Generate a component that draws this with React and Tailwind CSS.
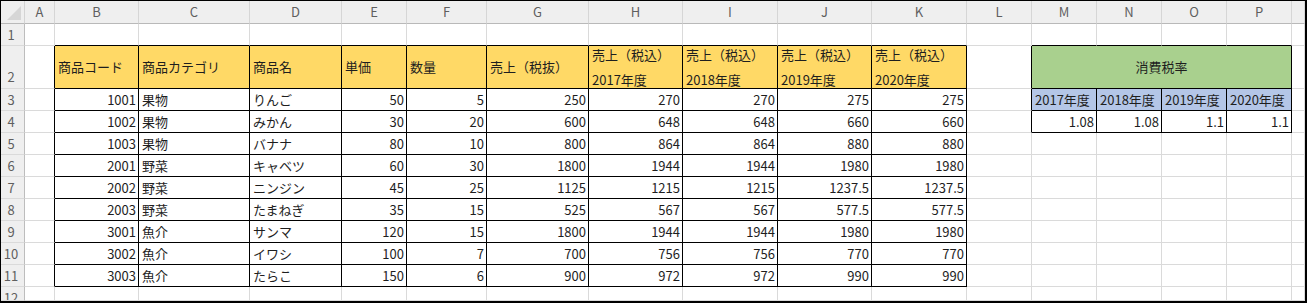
import React from 'react';

const LETTERS = ['', 'A', 'B', 'C', 'D', 'E', 'F', 'G', 'H', 'I', 'J', 'K', 'L', 'M', 'N', 'O', 'P', ''];

const HEADER = [
  '商品コード',
  '商品カテゴリ',
  '商品名',
  '単価',
  '数量',
  '売上（税抜）',
  ['売上（税込）', '2017年度'],
  ['売上（税込）', '2018年度'],
  ['売上（税込）', '2019年度'],
  ['売上（税込）', '2020年度'],
];

const ROWS = [
  [1001, '果物', 'りんご', 50, 5, 250, 270, 270, 275, 275],
  [1002, '果物', 'みかん', 30, 20, 600, 648, 648, 660, 660],
  [1003, '果物', 'バナナ', 80, 10, 800, 864, 864, 880, 880],
  [2001, '野菜', 'キャベツ', 60, 30, 1800, 1944, 1944, 1980, 1980],
  [2002, '野菜', 'ニンジン', 45, 25, 1125, 1215, 1215, 1237.5, 1237.5],
  [2003, '野菜', 'たまねぎ', 35, 15, 525, 567, 567, 577.5, 577.5],
  [3001, '魚介', 'サンマ', 120, 15, 1800, 1944, 1944, 1980, 1980],
  [3002, '魚介', 'イワシ', 100, 7, 700, 756, 756, 770, 770],
  [3003, '魚介', 'たらこ', 150, 6, 900, 972, 972, 990, 990],
];

const YEARS = ['2017年度', '2018年度', '2019年度', '2020年度'];
const RATES = [1.08, 1.08, 1.1, 1.1];

const inMain = (r, c) => r >= 2 && r <= 11 && c >= 2 && c <= 11;
const inTax = (r, c) => r >= 2 && r <= 4 && c >= 13 && c <= 16;
const inTable = (r, c) => inMain(r, c) || inTax(r, c);

function content(r, c) {
  // main table
  if (inMain(r, c)) {
    if (r === 2) return { value: HEADER[c - 2], bg: 'bg-[#ffd966]', align: 'left' };
    const v = ROWS[r - 3][c - 2];
    return { value: v, align: typeof v === 'number' ? 'right' : 'left' };
  }
  // tax table
  if (inTax(r, c)) {
    if (r === 2) return { value: '消費税率', bg: 'bg-[#a9d08e]', align: 'center' };
    if (r === 3) return { value: YEARS[c - 13], bg: 'bg-[#b4c6e7]', align: 'left' };
    return { value: RATES[c - 13], align: 'right' };
  }
  return { value: null };
}

function Corner() {
  return (
    <div className="bg-[#efefef] border-r border-b border-r-[#d4d4d4] border-b-[#b9b9b9] relative">
      <svg width="24" height="23" viewBox="0 0 24 23" className="absolute inset-0">
        <polygon points="20,5 20,19 6,19" fill="#d6d6d6" />
      </svg>
    </div>
  );
}

function Cell({ r, c }) {
  if (r === 0) {
    if (c === 0) return <Corner />;
    return (
      <div className="bg-[#efefef] border-r border-b border-r-[#d6d6d6] border-b-[#b9b9b9] flex items-center justify-center text-[#5f5f5f]">
        {LETTERS[c]}
      </div>
    );
  }

  if (c === 0) {
    return (
      <div
        className={`bg-[#efefef] border-r border-b border-r-[#bdbdbd] border-b-[#dadada] overflow-hidden flex ${
          r === 2 ? 'items-end' : 'items-start'
        }`}
      >
        <div className="h-[22px] w-full shrink-0 flex items-center justify-center pr-[3px] text-[#5f5f5f]">{r}</div>
      </div>
    );
  }

  const { value, bg, align } = content(r, c);
  const rightBlack = inTable(r, c) || inTable(r, c + 1);
  const bottomBlack = inTable(r, c) || inTable(r + 1, c);
  const merged = r === 2 && c === 13;

  return (
    <div
      className={`border-r border-b overflow-hidden flex items-center whitespace-nowrap ${
        rightBlack ? 'border-r-black' : 'border-r-[#dadada]'
      } ${bottomBlack ? 'border-b-black' : 'border-b-[#dadada]'} ${bg || 'bg-white'} ${
        merged ? 'col-span-4' : ''
      } ${
        align === 'right'
          ? 'justify-end pr-[2px]'
          : align === 'center'
          ? 'justify-center'
          : 'justify-start pl-[3px]'
      }`}
    >
      {Array.isArray(value) ? (
        <div className="flex flex-col leading-[25px]">
          <span>{value[0]}</span>
          <span>{value[1]}</span>
        </div>
      ) : (
        value
      )}
    </div>
  );
}

export default function App() {
  const cells = [];
  for (let r = 0; r <= 12; r++) {
    for (let c = 0; c <= 17; c++) {
      if (r === 2 && c >= 14 && c <= 16) continue; // merged into M2
      cells.push(<Cell key={`${r}-${c}`} r={r} c={c} />);
    }
  }

  return (
    <div className="w-[1307px] h-[303px] overflow-hidden bg-white border-t border-l border-r-2 border-b-2 border-black">
      <div className="grid h-full grid-cols-[24px_30px_84px_111px_92px_65px_80px_102px_94px_95px_94px_95px_65px_65px_65px_65px_65px_1fr] grid-rows-[23px_22px_43px_repeat(9,22px)_1fr] text-[13px] text-[#1e1e1e] font-['Noto_Sans_CJK_JP','Noto_Sans',sans-serif]">
        {cells}
      </div>
    </div>
  );
}
